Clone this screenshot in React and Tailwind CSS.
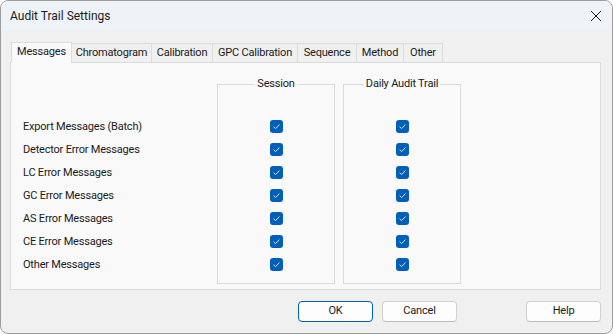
const tabs = [
    { label: 'Messages', width: 'w-[61px]', active: true },
    { label: 'Chromatogram', width: 'w-[81px]' },
    { label: 'Calibration', width: 'w-[62px]' },
    { label: 'GPC Calibration', width: 'w-[86px]' },
    { label: 'Sequence', width: 'w-[60px]' },
    { label: 'Method', width: 'w-[48px]' },
    { label: 'Other', width: 'w-[40px]' },
];

const messages = [
    'Export Messages (Batch)',
    'Detector Error Messages',
    'LC Error Messages',
    'GC Error Messages',
    'AS Error Messages',
    'CE Error Messages',
    'Other Messages',
];

export default function App() {
    return (
        <div className="flex h-[334px] w-[613px] flex-col overflow-hidden rounded-[8px] border border-[#9c9c9c] bg-[#f0f0f0] font-['Roboto','Liberation_Sans',sans-serif] text-[11px] tracking-[-0.2px] text-[#1a1a1a]">
            <div className="flex h-[30px] items-center justify-between bg-[#eef3f8] pl-[9px] pr-[10px]">
                <span className="text-[12px] tracking-normal">
                    Audit Trail Settings
                </span>
                <CloseIcon />
            </div>

            <div className="ml-[10px] mt-[11px] flex items-end whitespace-nowrap">
                {tabs.map((tab) => (
                    <div
                        key={tab.label}
                        className={`${tab.width} flex items-center justify-center border border-b-0 border-[#dcdcdc] ${
                            tab.active
                                ? 'relative z-10 -mb-px h-[21px] bg-[#f9f9f9] pb-[2px]'
                                : '-ml-px h-[19px] bg-[#f0f0f0] first:ml-0'
                        }`}
                    >
                        {tab.label}
                    </div>
                ))}
            </div>

            <div className="ml-[9px] mr-[11px] flex h-[228px] border border-[#dcdcdc] bg-[#f9f9f9] pt-[13px]">
                <div className="w-[206px] pl-[12px] pt-[40px]">
                    {messages.map((message) => (
                        <div
                            key={message}
                            className="flex h-[23px] items-center"
                        >
                            {message}
                        </div>
                    ))}
                </div>

                <GroupBox title="Session" />

                <div className="w-[8px]" />

                <GroupBox title="Daily Audit Trail" />
            </div>

            <div className="mr-[11px] mt-[11px] flex justify-end">
                <Button primary>OK</Button>
                <Button className="ml-[9px]">Cancel</Button>
                <Button className="ml-[69px]">Help</Button>
            </div>
        </div>
    );
}

function GroupBox({ title }) {
    return (
        <fieldset className="h-[208px] w-[118px] border border-[#dcdcdc]">
            <legend className="mx-auto px-[2px] leading-[16px]">
                {title}
            </legend>

            <div className="pt-[23px]">
                {messages.map((message) => (
                    <div
                        key={message}
                        className="flex h-[23px] items-center justify-center"
                    >
                        <CheckBox />
                    </div>
                ))}
            </div>
        </fieldset>
    );
}

function CheckBox() {
    return (
        <svg width="13" height="13" viewBox="0 0 13 13">
            <rect
                x="0"
                y="0"
                width="13"
                height="13"
                rx="3"
                fill="#005fb8"
            />
            <path
                d="M3.6 6.7 L5.6 8.6 L9.4 4.6"
                fill="none"
                stroke="#d6e6f5"
                strokeWidth="1"
            />
        </svg>
    );
}

function Button({ primary, className = '', children }) {
    return (
        <button
            type="button"
            className={`h-[21px] w-[75px] rounded-[4px] border bg-[#fdfdfd] ${
                primary
                    ? 'border-[#005fb8]'
                    : 'border-[#d0d0d0] border-b-[#bcbcbc]'
            } ${className}`}
        >
            {children}
        </button>
    );
}

function CloseIcon() {
    return (
        <svg width="12" height="12" viewBox="0 0 12 12">
            <path
                d="M1 1 L11 11 M11 1 L1 11"
                stroke="#1a1a1a"
                strokeWidth="1"
            />
        </svg>
    );
}
